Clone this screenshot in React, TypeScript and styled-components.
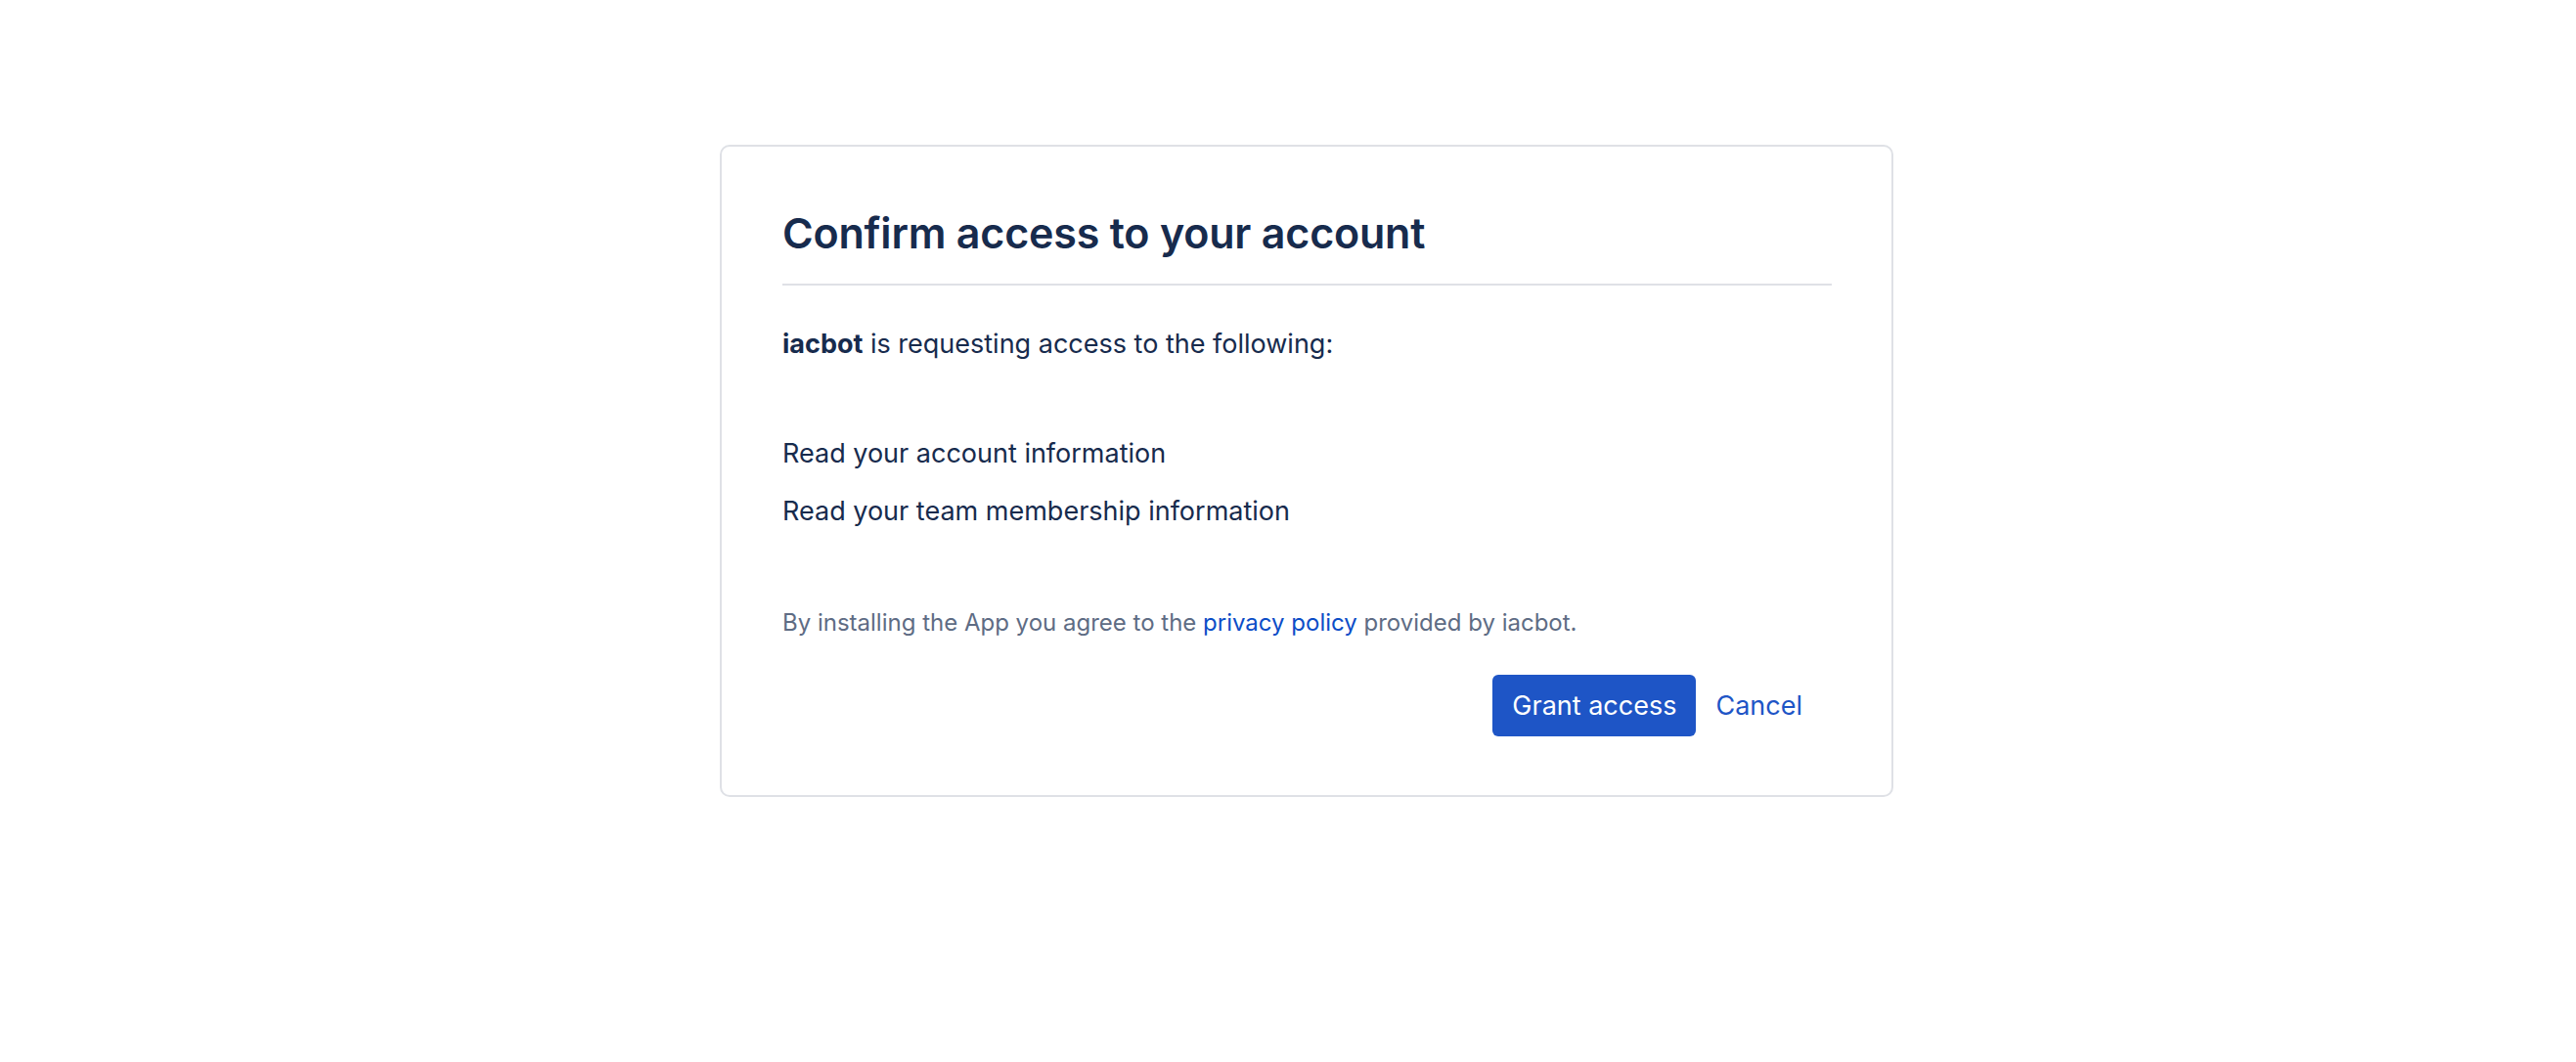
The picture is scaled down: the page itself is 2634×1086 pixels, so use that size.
import styled, { createGlobalStyle } from 'styled-components';

const GlobalStyle = createGlobalStyle`
  html, body {
    margin: 0;
    padding: 0;
    background: #ffffff;
  }

  body {
    font-family: Inter, "Noto Sans", "Liberation Sans", sans-serif;
    color: #172b4d;
    -webkit-font-smoothing: antialiased;
  }
`;

const Page = styled.main`
  width: 2634px;
  min-height: 1086px;
  padding-top: 148px;
  box-sizing: border-box;
`;

const Card = styled.section`
  box-sizing: border-box;
  width: 1200px;
  margin-left: 736px;
  padding: 62px 61px 60px 62px;
  border: 2px solid #dfe1e6;
  border-radius: 10px;
  background: white;
`;

const Title = styled.h1`
  margin: 0;
  padding: 0 0 25px;
  font-size: 43px;
  line-height: 53px;
  font-weight: 600;
  letter-spacing: -0.2px;
  color: #172b4d;
  border-bottom: 2px solid #dfe1e6;
`;

const Intro = styled.p`
  margin: 40px 0 0;
  font-size: 27px;
  line-height: 40px;
  color: #172b4d;

  strong {
    font-weight: 700;
  }
`;

const ScopeList = styled.ul`
  list-style: none;
  margin: 72px 0 0;
  padding: 0;
  display: flex;
  flex-direction: column;
  gap: 19px;
`;

const Scope = styled.li`
  font-size: 27px;
  line-height: 40px;
  color: #172b4d;
`;

const Notice = styled.p`
  margin: 78px 0 0;
  font-size: 24px;
  line-height: 32px;
  color: #5e6c84;
`;

const Link = styled.a`
  color: #0c4dc7;
  text-decoration: none;
`;

const Actions = styled.div`
  display: flex;
  justify-content: flex-end;
  align-items: center;
  gap: 4px;
  margin-top: 37px;
  padding-right: 14px;
`;

const Button = styled.button<{ $primary?: boolean }>`
  height: 63px;
  padding: 0 ${(p) => (p.$primary ? '20px' : '16px')};
  border: none;
  border-radius: 6px;
  font-family: inherit;
  font-size: 27px;
  font-weight: 400;
  cursor: pointer;
  background: ${(p) => (p.$primary ? '#1e55c6' : 'transparent')};
  color: ${(p) => (p.$primary ? '#ffffff' : '#1e55c6')};
`;

export default function App() {
  return (
    <>
      <GlobalStyle />
      <Page>
        <Card>
          <Title>Confirm access to your account</Title>
          <Intro>
            <strong>iacbot</strong> is requesting access to the following:
          </Intro>
          <ScopeList>
            <Scope>Read your account information</Scope>
            <Scope>Read your team membership information</Scope>
          </ScopeList>
          <Notice>
            By installing the App you agree to the <Link href="#">privacy policy</Link> provided by
            iacbot.
          </Notice>
          <Actions>
            <Button $primary>Grant access</Button>
            <Button>Cancel</Button>
          </Actions>
        </Card>
      </Page>
    </>
  );
}
